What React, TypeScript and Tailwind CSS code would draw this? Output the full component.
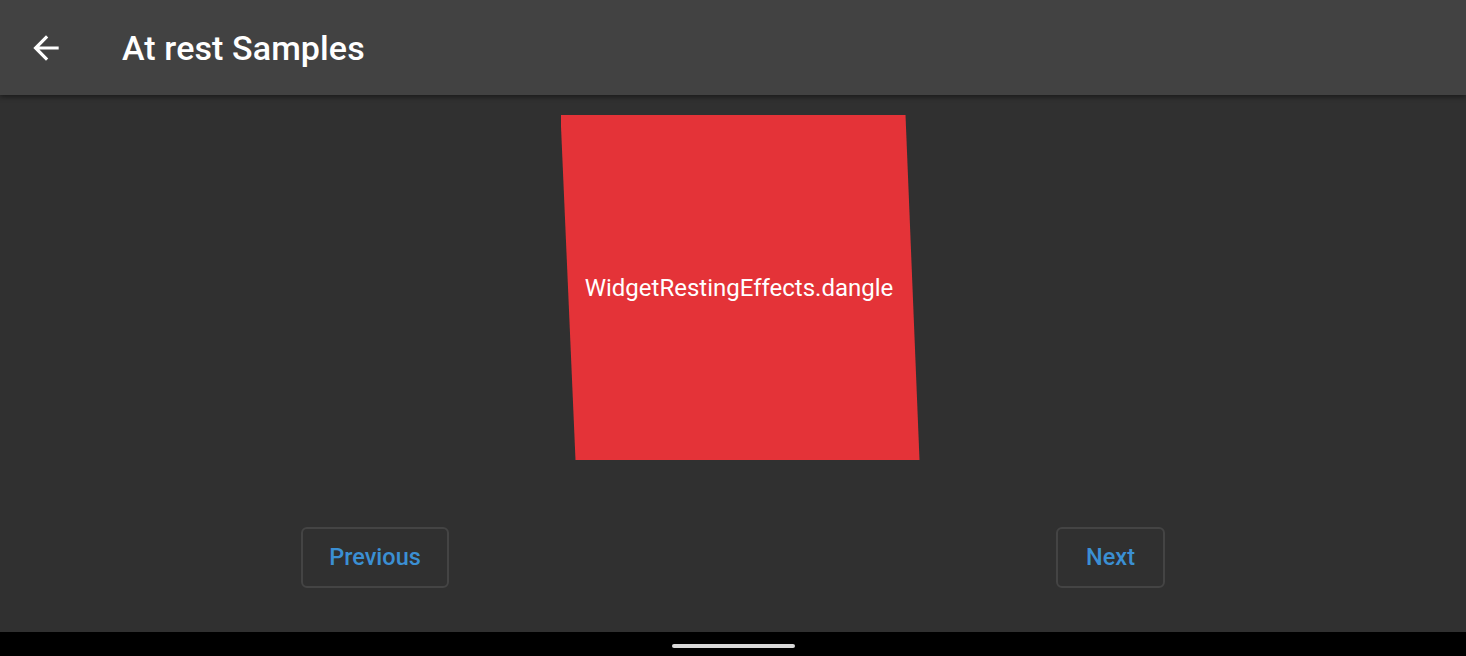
import React from "react";

export default function App() {
  return (
    <div
      className="w-[1466px] h-[656px] flex flex-col bg-[#303030] overflow-hidden"
      style={{ fontFamily: "Roboto, 'Noto Sans', sans-serif" }}
    >
      <header className="relative z-10 h-[95px] shrink-0 bg-[#424242] flex items-center shadow-[0_2px_5px_rgba(0,0,0,0.45)]">
        <div className="w-[122px] flex items-center pl-[27px]">
          <svg width="38" height="38" viewBox="0 0 24 24" fill="none">
            <path
              d="M20 11H7.83l5.59-5.59L12 4l-8 8 8 8 1.41-1.41L7.83 13H20v-2z"
              fill="#ffffff"
            />
          </svg>
        </div>
        <h1 className="text-white text-[34px] font-medium leading-none tracking-[0.1px] mt-[1px]">
          At rest Samples
        </h1>
      </header>
      <main className="flex-1 flex flex-col">
        <div className="flex justify-center pt-[20px]">
          <div className="relative w-[359px] h-[345px] ml-[14px] flex items-center justify-center">
            <div className="absolute inset-0 bg-[#e43338] [clip-path:polygon(0_0,345px_0,100%_100%,15px_100%)]" />
            <span className="relative text-white text-[24px] leading-none mt-[1px] mr-[2px]">
              WidgetRestingEffects.dangle
            </span>
          </div>
        </div>
        <div className="flex justify-between px-[301px] mt-[67px]">
          <button className="w-[148px] h-[61px] rounded-[6px] border-2 border-[#444444] text-[#3b8fd3] text-[23.5px] font-medium flex items-center justify-center">
            Previous
          </button>
          <button className="w-[109px] h-[61px] rounded-[6px] border-2 border-[#444444] text-[#3b8fd3] text-[23.5px] font-medium flex items-center justify-center">
            Next
          </button>
        </div>
      </main>
      <div className="h-[24px] shrink-0 bg-black flex items-center justify-center">
        <div className="w-[123px] h-[4px] mt-[4px] rounded-full bg-[#d9d9d9]" />
      </div>
    </div>
  );
}
